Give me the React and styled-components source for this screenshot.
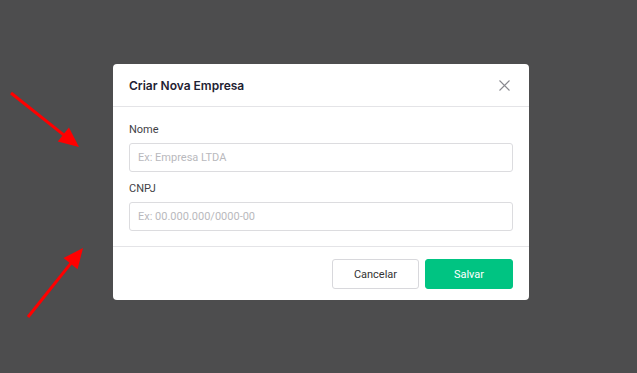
import React from "react";
import styled, { createGlobalStyle } from "styled-components";

const GlobalStyle = createGlobalStyle`
  html, body {
    margin: 0;
    padding: 0;
    height: 100%;
    background: #4d4d4e;
  }
  #root {
    height: 100%;
  }
`;

const Backdrop = styled.div`
  position: relative;
  width: 637px;
  height: 373px;
  background: #4d4d4e;
  display: flex;
  justify-content: flex-start;
  align-items: flex-start;
  padding: 64px 0 0 113px;
  box-sizing: border-box;
  font-family: Roboto, "Liberation Sans", sans-serif;
`;

const Modal = styled.div`
  width: 416px;
  background: #fff;
  border-radius: 4px;
  display: flex;
  flex-direction: column;
`;

const Header = styled.div`
  height: 42px;
  padding: 0 16px;
  display: flex;
  align-items: center;
  justify-content: space-between;
  border-bottom: 1px solid #e4e4e7;
`;

const Title = styled.h2`
  margin: 0;
  font-family: Inter, "Liberation Sans", sans-serif;
  font-size: 12px;
  font-weight: 600;
  color: #1f2233;
`;

const CloseButton = styled.button`
  border: none;
  background: none;
  padding: 0;
  width: 14px;
  height: 14px;
  display: flex;
  align-items: center;
  justify-content: center;
  cursor: pointer;
  margin-right: 2px;
`;

const Body = styled.div`
  padding: 16px 16px 15px;
  display: flex;
  flex-direction: column;
  gap: 10px;
  border-bottom: 1px solid #e4e4e7;
`;

const Field = styled.div`
  display: flex;
  flex-direction: column;
  gap: 7px;
`;

const Label = styled.label`
  font-size: 11px;
  color: #3f3f46;
  line-height: 13px;
`;

const Input = styled.input`
  height: 29px;
  box-sizing: border-box;
  border: 1px solid #dcdcdf;
  border-radius: 3px;
  padding: 0 8px;
  font-family: Roboto, "Liberation Sans", sans-serif;
  font-size: 11px;
  outline: none;
  &::placeholder {
    color: #b9b9bd;
  }
`;

const Footer = styled.div`
  padding: 12px 16px 11px;
  display: flex;
  justify-content: flex-end;
  gap: 6px;
`;

const Button = styled.button`
  height: 30px;
  width: ${(p) => (p.$primary ? "88px" : "87px")};
  border-radius: 3px;
  font-family: Roboto, "Liberation Sans", sans-serif;
  font-size: 11px;
  cursor: pointer;
  border: 1px solid ${(p) => (p.$primary ? "#00c482" : "#d8d8dc")};
  background: ${(p) => (p.$primary ? "#00c482" : "#fff")};
  color: ${(p) => (p.$primary ? "#fff" : "#333")};
`;

const Arrows = styled.svg`
  position: absolute;
  left: 0;
  top: 0;
  pointer-events: none;
`;

function Arrow({ x1, y1, x2, y2 }) {
  const dx = x2 - x1;
  const dy = y2 - y1;
  const len = Math.hypot(dx, dy);
  const ux = dx / len;
  const uy = dy / len;
  const headLen = 20;
  const headW = 9;
  const bx = x2 - ux * headLen;
  const by = y2 - uy * headLen;
  const px = -uy;
  const py = ux;
  return (
    <g>
      <line x1={x1} y1={y1} x2={bx + ux * 2} y2={by + uy * 2} stroke="#ff0000" strokeWidth="3" />
      <polygon
        points={`${x2},${y2} ${bx + px * headW},${by + py * headW} ${bx - px * headW},${by - py * headW}`}
        fill="#ff0000"
      />
    </g>
  );
}

export default function App() {
  return (
    <>
      <GlobalStyle />
      <Backdrop>
        <Modal>
          <Header>
            <Title>Criar Nova Empresa</Title>
            <CloseButton aria-label="Fechar">
              <svg width="11" height="11" viewBox="0 0 11 11">
                <path d="M0.5 0.5 L10.5 10.5 M10.5 0.5 L0.5 10.5" stroke="#8a8a90" strokeWidth="1.1" />
              </svg>
            </CloseButton>
          </Header>
          <Body>
            <Field>
              <Label htmlFor="nome">Nome</Label>
              <Input id="nome" placeholder="Ex: Empresa LTDA" />
            </Field>
            <Field>
              <Label htmlFor="cnpj">CNPJ</Label>
              <Input id="cnpj" placeholder="Ex: 00.000.000/0000-00" />
            </Field>
          </Body>
          <Footer>
            <Button>Cancelar</Button>
            <Button $primary>Salvar</Button>
          </Footer>
        </Modal>
        <Arrows width="637" height="373">
          <Arrow x1={11} y1={93} x2={79} y2={147} />
          <Arrow x1={28} y1={317} x2={83} y2={248} />
        </Arrows>
      </Backdrop>
    </>
  );
}
